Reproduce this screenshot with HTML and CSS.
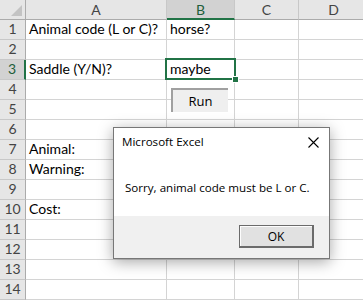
FILE: index.html
```html
<!DOCTYPE html>
<html>
<head>
<meta charset="utf-8">
<link rel="stylesheet" href="styles.css">
</head>
<body>
<div class="sheet">
  <div class="grid">
    <div class="hd corner"><svg class="tri" width="12" height="12" viewBox="0 0 12 12"><polygon points="11,0 11,11 0,11" fill="#c3c3c3"/></svg></div>
    <div class="hd col">A</div>
    <div class="hd col sel-col">B</div>
    <div class="hd col">C</div>
    <div class="hd col">D</div>

    <div class="hd row">1</div><div class="c">Animal code (L or C)?</div><div class="c">horse?</div><div class="c"></div><div class="c"></div>
    <div class="hd row">2</div><div class="c"></div><div class="c"></div><div class="c"></div><div class="c"></div>
    <div class="hd row sel-row">3</div><div class="c">Saddle (Y/N)?</div><div class="c">maybe</div><div class="c"></div><div class="c"></div>
    <div class="hd row">4</div><div class="c"></div><div class="c"></div><div class="c"></div><div class="c"></div>
    <div class="hd row">5</div><div class="c"></div><div class="c"></div><div class="c"></div><div class="c"></div>
    <div class="hd row">6</div><div class="c"></div><div class="c"></div><div class="c"></div><div class="c"></div>
    <div class="hd row">7</div><div class="c">Animal:</div><div class="c"></div><div class="c"></div><div class="c"></div>
    <div class="hd row">8</div><div class="c">Warning:</div><div class="c"></div><div class="c"></div><div class="c"></div>
    <div class="hd row">9</div><div class="c"></div><div class="c"></div><div class="c"></div><div class="c"></div>
    <div class="hd row">10</div><div class="c">Cost:</div><div class="c"></div><div class="c"></div><div class="c"></div>
    <div class="hd row">11</div><div class="c"></div><div class="c"></div><div class="c"></div><div class="c"></div>
    <div class="hd row">12</div><div class="c"></div><div class="c"></div><div class="c"></div><div class="c"></div>
    <div class="hd row">13</div><div class="c"></div><div class="c"></div><div class="c"></div><div class="c"></div>
    <div class="hd row">14</div><div class="c"></div><div class="c"></div><div class="c"></div><div class="c"></div>
  </div>

  <div class="selection"><span class="handle"></span></div>

  <div class="run-btn">Run</div>

  <div class="dialog">
    <div class="dlg-title">
      <span>Microsoft Excel</span>
      <svg class="dlg-close" width="11" height="11" viewBox="0 0 11 11"><path d="M0.5 0.5 L10.5 10.5 M10.5 0.5 L0.5 10.5" stroke="#000" stroke-width="1.1" fill="none"/></svg>
    </div>
    <div class="dlg-body">Sorry, animal code must be L or C.</div>
    <div class="dlg-foot"><div class="ok-btn">OK</div></div>
  </div>
</div>
</body>
</html>
```

FILE: styles.css
```css
html, body {
  margin: 0;
  padding: 0;
  background: #ffffff;
  overflow: hidden;
}

.sheet {
  position: relative;
  width: 363px;
  height: 300px;
  overflow: hidden;
}

.grid {
  display: grid;
  grid-template-columns: 26px 141px 68px 64px 70px;
  grid-template-rows: 20px repeat(14, 20px);
  font-family: Lato, "Open Sans", sans-serif;
  font-size: 14px;
  color: #000;
}

.grid > div {
  box-sizing: border-box;
  border-right: 1px solid #d4d4d4;
  border-bottom: 1px solid #d4d4d4;
}

.c {
  display: flex;
  align-items: flex-end;
  padding: 0 0 2px 3px;
  white-space: nowrap;
  line-height: 17px;
}

.hd {
  background: #e6e6e6;
  color: #444;
  display: flex;
  align-items: flex-end;
  justify-content: center;
  line-height: 17px;
  padding-bottom: 1px;
}

.grid > .col {
  border-bottom: 1px solid #ababab;
  border-right: 1px solid #c8c8c8;
}

.grid > .row {
  border-right: 1px solid #ababab;
  border-bottom: 1px solid #c8c8c8;
  padding-bottom: 2px;
}

.grid > .corner {
  position: relative;
  border-right: 1px solid #ababab;
  border-bottom: 1px solid #ababab;
}

.tri {
  position: absolute;
  right: 2px;
  bottom: 2px;
}

.grid > .sel-col {
  background: #d2d2d2;
  color: #1e5e3a;
  border-bottom: 2px solid #217346;
  padding-bottom: 0;
}

.grid > .sel-row {
  background: #d2d2d2;
  color: #1e5e3a;
  border-right: 2px solid #217346;
}

.selection {
  position: absolute;
  left: 165px;
  top: 58px;
  width: 71px;
  height: 22px;
  box-sizing: border-box;
  border: 2px solid #217346;
}

.handle {
  position: absolute;
  right: -5px;
  bottom: -5px;
  width: 5px;
  height: 5px;
  background: #217346;
  border: 1px solid #fff;
}

.run-btn {
  position: absolute;
  left: 171px;
  top: 88px;
  width: 57px;
  height: 24px;
  box-sizing: border-box;
  background: #efefef;
  border-top: 2px solid #a0a0a0;
  border-left: 2px solid #a0a0a0;
  display: flex;
  align-items: center;
  justify-content: center;
  font-family: "Open Sans", sans-serif;
  font-size: 13px;
  color: #000;
}

.dialog {
  position: absolute;
  left: 113px;
  top: 127px;
  width: 217px;
  height: 132px;
  box-sizing: border-box;
  border: 1px solid #777;
  background: #fff;
  box-shadow: 0 3px 14px rgba(0, 0, 0, 0.35);
  display: flex;
  flex-direction: column;
  font-family: "Open Sans", sans-serif;
  font-size: 11.6px;
  color: #000;
}

.dlg-title {
  height: 30px;
  box-sizing: border-box;
  padding: 6px 10px 0 8px;
  display: flex;
  justify-content: space-between;
  align-items: flex-start;
  line-height: 16px;
}

.dlg-close {
  margin-top: 3px;
}

.dlg-body {
  height: 58px;
  box-sizing: border-box;
  padding: 22px 0 0 11px;
  line-height: 16px;
  white-space: nowrap;
}

.dlg-foot {
  flex: 1;
  background: #f0f0f0;
  display: flex;
  justify-content: flex-end;
  align-items: flex-start;
  padding: 9px 15px 0 0;
}

.ok-btn {
  width: 75px;
  height: 23px;
  box-sizing: border-box;
  background: #e1e1e1;
  border: 1px solid #6b6b6b;
  border-right-width: 2px;
  border-bottom-width: 2px;
  box-shadow: inset 1px 1px 0 #fdfdfd;
  display: flex;
  align-items: center;
  justify-content: center;
  font-size: 12px;
}
```
